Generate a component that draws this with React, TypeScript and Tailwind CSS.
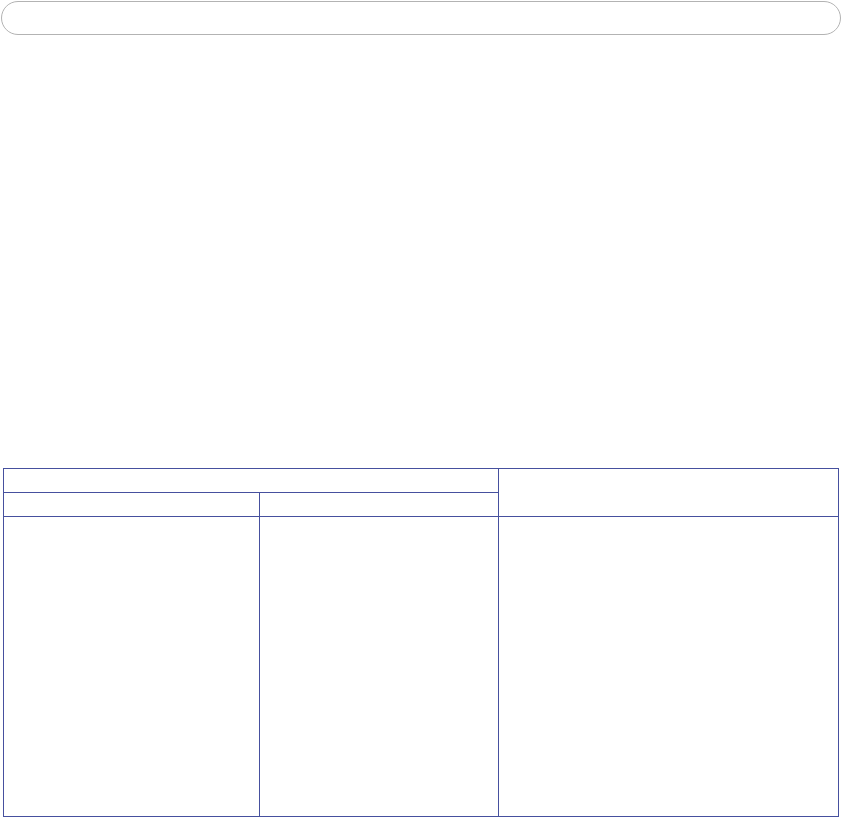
import React from "react"

const line = "border-[#46509e]"

const App = () => {
  return (
    <div className="w-[842px] h-[817px] bg-white font-['Liberation_Sans',sans-serif] overflow-hidden">
      <div className="ml-[1px] mt-[1px] w-[840px] h-[34px] rounded-full border border-[#b3b3b3]" />

      <div
        className={`ml-[3px] mt-[433px] w-[836px] grid grid-cols-[256px_239px_340px] grid-rows-[24px_24px_300px] border-l border-t ${line}`}
      >
        <div className={`col-span-2 border-r border-b ${line}`} />
        <div className={`row-span-2 border-r border-b ${line}`} />
        <div className={`border-r border-b ${line}`} />
        <div className={`border-r border-b ${line}`} />
        <div className={`border-r border-b ${line}`} />
        <div className={`border-r border-b ${line}`} />
        <div className={`border-r border-b ${line}`} />
      </div>
    </div>
  )
}

export default App
